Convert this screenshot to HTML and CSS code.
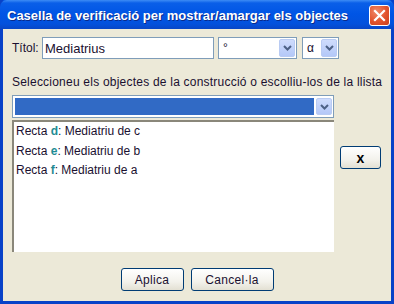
FILE: index.html
```html
<!DOCTYPE html>
<html lang="ca">
<head>
  <meta charset="UTF-8" />
  <title>Casella de verificació</title>
  <link rel="stylesheet" href="styles.css">
</head>
<body>

<div class="window">
  <div class="titlebar">
    <span class="title">Casella de verificació per mostrar/amargar els objectes</span>
    <span class="close">
      <svg width="13" height="13" viewBox="0 0 13 13"><path d="M2 2 L11 11 M11 2 L2 11" stroke="#fff" stroke-width="2.2" stroke-linecap="square"/></svg>
    </span>
  </div>

  <div class="client">
    <div class="row-title">
      <label class="lbl">Títol:</label>
      <div class="field field-title">Mediatrius</div>
      <div class="field combo combo-deg">
        <span class="combo-text">°</span>
        <span class="arrow"><svg width="9" height="6" viewBox="0 0 9 6"><path d="M1 1 L4.5 4.5 L8 1" fill="none" stroke="#4d6185" stroke-width="2"/></svg></span>
      </div>
      <div class="field combo combo-greek">
        <span class="combo-text">α</span>
        <span class="arrow"><svg width="9" height="6" viewBox="0 0 9 6"><path d="M1 1 L4.5 4.5 L8 1" fill="none" stroke="#4d6185" stroke-width="2"/></svg></span>
      </div>
    </div>

    <p class="hint">Seleccioneu els objectes de la construcció o escolliu-los de la llista</p>

    <div class="field combo combo-objects">
      <span class="selected"></span>
      <span class="arrow"><svg width="9" height="6" viewBox="0 0 9 6"><path d="M1 1 L4.5 4.5 L8 1" fill="none" stroke="#4d6185" stroke-width="2"/></svg></span>
    </div>

    <div class="list-row">
      <ul class="list">
        <li>Recta <b>d</b>: Mediatriu de c</li>
        <li>Recta <b>e</b>: Mediatriu de b</li>
        <li>Recta <b>f</b>: Mediatriu de a</li>
      </ul>
      <div class="side">
        <button class="btn btn-remove">x</button>
      </div>
    </div>

    <div class="actions">
      <button class="btn btn-apply">Aplica</button>
      <button class="btn btn-cancel">Cancel·la</button>
    </div>
  </div>
</div>

</body>
</html>
```

FILE: styles.css
```css
:root {
  --xp-blue: #0054e3;
  --face: #ece9d8;
  --field-border: #7f9db9;
  --text: #1a1030;
  --teal: #1f8c94;
}

body {
  margin: 0;
  font-family: "Liberation Sans", Arial, sans-serif;
  font-size: 12px;
  color: var(--text);
}

.window {
  width: 394px;
  height: 304px;
  box-sizing: border-box;
  background: var(--xp-blue);
  border: 3px solid #0842c8;
  border-top: none;
  display: flex;
  flex-direction: column;
}

.titlebar {
  height: 29px;
  margin: 0 -3px;
  padding: 0 4px 0 7px;
  display: flex;
  align-items: center;
  justify-content: space-between;
  background: linear-gradient(#3d8cf5 0, #0a5fe8 3px, #0055e5 14px, #0351dc 24px, #0846c6 29px);
  border-radius: 7px 7px 0 0;
}

.title {
  color: #fff;
  font-family: "Liberation Sans", Arial, sans-serif;
  font-weight: bold;
  font-size: 13px;
  text-shadow: 1px 1px 0 #0a2a8a;
  margin-top: 1px;
}

.close {
  width: 19px;
  height: 19px;
  margin-top: 2px;
  border: 1px solid #fff;
  border-radius: 3px;
  background: radial-gradient(circle at 35% 30%, #f08a6a, #e2532d 55%, #c8401d);
  display: flex;
  align-items: center;
  justify-content: center;
}

.client {
  flex: 1;
  background: var(--face);
  padding: 8px 0 0 9px;
}

.row-title {
  display: flex;
  align-items: center;
  height: 22px;
}

.lbl {
  width: 30px;
}

.field {
  box-sizing: border-box;
  height: 22px;
  border: 1px solid var(--field-border);
  background: #fff;
  display: flex;
  align-items: center;
}

.field-title {
  width: 172px;
  padding-left: 2px;
  font-size: 13px;
}

.combo {
  justify-content: space-between;
  padding: 1px;
}

.combo-deg {
  width: 79px;
  margin-left: 4px;
}

.combo-greek {
  width: 37px;
  margin-left: 5px;
}

.combo-text {
  padding-left: 3px;
}

.arrow {
  width: 16px;
  height: 100%;
  box-sizing: border-box;
  border: 1px solid #b9cbf3;
  border-radius: 2px;
  background: linear-gradient(#cfdcfc, #b4c8f8);
  display: flex;
  align-items: center;
  justify-content: center;
}

.hint {
  margin: 14px 0 0;
  height: 18px;
  line-height: 18px;
  letter-spacing: 0.22px;
}

.combo-objects {
  width: 322px;
  height: 23px;
  margin-top: 4px;
  padding: 2px 1px 2px 2px;
}

.selected {
  flex: 1;
  height: 100%;
  background: #316ac5;
  margin-right: 2px;
}

.list-row {
  display: flex;
  margin-top: 2px;
}

.list {
  box-sizing: border-box;
  width: 322px;
  height: 132px;
  margin: 0;
  padding: 0 0 0 2px;
  list-style: none;
  background: #fff;
  border-top: 2px solid #8a877a;
  border-left: 2px solid #8a877a;
}

.list li {
  height: 19.5px;
  line-height: 19.5px;
  font-size: 12px;
}

.list b {
  color: var(--teal);
}

.side {
  padding: 26px 0 0 6px;
}

.btn {
  box-sizing: border-box;
  height: 23px;
  border: 1px solid #003c74;
  border-radius: 3px;
  background: linear-gradient(#ffffff, #f3f2ec 60%, #e3e0d3);
  font-family: "Liberation Sans", Arial, sans-serif;
  font-size: 12px;
  color: var(--text);
  padding: 0;
  letter-spacing: 0.3px;
}

.btn-remove {
  width: 41px;
  font-weight: bold;
  font-size: 14px;
  color: #000;
  line-height: 18px;
}

.actions {
  display: flex;
  justify-content: center;
  gap: 7px;
  margin-top: 16px;
  padding-right: 9px;
}

.btn-apply {
  width: 63px;
}

.btn-cancel {
  width: 83px;
}
```
